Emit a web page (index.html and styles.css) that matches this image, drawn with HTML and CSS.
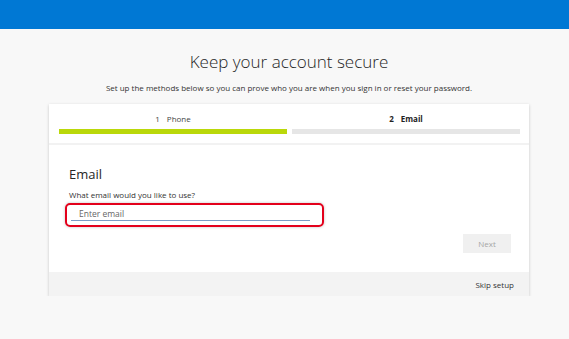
FILE: index.html
```html
<!DOCTYPE html>
<html lang="en">
<head>
    <meta charset="UTF-8">
    <meta name="viewport" content="width=device-width, initial-scale=1.0">
    <title>Keep your account secure</title>
    <link rel="stylesheet" href="styles.css">
</head>
<body>

    <!-- Top bar -->
    <div class="topbar"></div>

    <div class="page">
        <h1 class="title">Keep your account secure</h1>
        <p class="subtitle">Set up the methods below so you can prove who you are when you sign in or reset your password.</p>

        <div class="card">
            <!-- Steps -->
            <div class="steps">
                <div class="step done">
                    <div class="step-label"><span class="step-num">1</span>Phone</div>
                    <div class="step-bar"></div>
                </div>
                <div class="step current">
                    <div class="step-label"><span class="step-num">2</span>Email</div>
                    <div class="step-bar"></div>
                </div>
            </div>

            <div class="card-body">
                <h2 class="section-title">Email</h2>
                <label class="field-label" for="email">What email would you like to use?</label>
                <div class="highlight">
                    <input type="text" id="email" class="field" placeholder="Enter email">
                </div>
                <div class="actions">
                    <button class="next-btn" disabled>Next</button>
                </div>
            </div>

            <div class="card-footer">
                <a class="skip-link" href="#">Skip setup</a>
            </div>
        </div>
    </div>

</body>
</html>
```

FILE: styles.css
```css
body {
    font-family: "Open Sans", "Noto Sans", sans-serif;
    background-color: #f8f8f8;
    color: #333;
    margin: 0;
    padding: 0;
}

.topbar {
    height: 29px;
    background-color: #0078d4;
}

.page {
    padding: 0 40px 0 49px;
}

.title {
    margin: 21px 0 0;
    font-size: 17px;
    font-weight: 300;
    line-height: 24px;
    text-align: center;
    color: #1f1f1f;
}

.subtitle {
    margin: 8px 0 0;
    font-size: 8px;
    line-height: 12px;
    text-align: center;
    color: #333;
}

.card {
    margin-top: 10px;
    background-color: white;
    box-shadow: 0 1px 3px rgba(0, 0, 0, 0.2);
}

.steps {
    display: flex;
    gap: 5px;
    padding: 9px 9px 9px 10px;
    border-bottom: 2px solid #f2f2f2;
}

.step {
    flex: 1;
}

.step-label {
    font-size: 8px;
    line-height: 12px;
    text-align: center;
    color: #444;
}

.step-num {
    margin-right: 7px;
}

.step.current .step-label {
    font-weight: 700;
    color: #222;
}

.step-bar {
    height: 5px;
    margin-top: 4px;
    background-color: #e6e6e6;
}

.step.done .step-bar {
    background-color: #bad80a;
}

.card-body {
    padding: 20px 18px 19px 20px;
}

.section-title {
    margin: 0;
    font-size: 13px;
    font-weight: 400;
    line-height: 18px;
    color: #262626;
}

.field-label {
    display: block;
    margin-top: 6px;
    font-size: 8px;
    line-height: 12px;
    color: #333;
}

.highlight {
    width: 239px;
    margin: 2px 0 0 -4px;
    padding: 2px 12px 4px 4px;
    border: 2px solid #e3001b;
    border-radius: 5px;
    box-shadow: 0 0 3px rgba(0, 0, 0, 0.25);
}

.field {
    display: block;
    width: 100%;
    box-sizing: border-box;
    height: 14px;
    padding: 0 8px;
    border: none;
    border-bottom: 1px solid #7a9cc6;
    background: transparent;
    font-family: inherit;
    font-size: 8.5px;
    color: #333;
    outline: none;
}

.field::placeholder {
    color: #666;
}

.actions {
    display: flex;
    justify-content: flex-end;
    margin-top: 7px;
}

.next-btn {
    width: 48px;
    height: 19px;
    padding: 0;
    border: none;
    background-color: #f0f0f0;
    color: #a6a6a6;
    font-family: inherit;
    font-size: 8px;
}

.card-footer {
    display: flex;
    justify-content: flex-end;
    align-items: center;
    height: 24px;
    padding-right: 15px;
    background-color: #f3f3f3;
}

.skip-link {
    font-size: 8px;
    color: #333;
    text-decoration: none;
}
```
